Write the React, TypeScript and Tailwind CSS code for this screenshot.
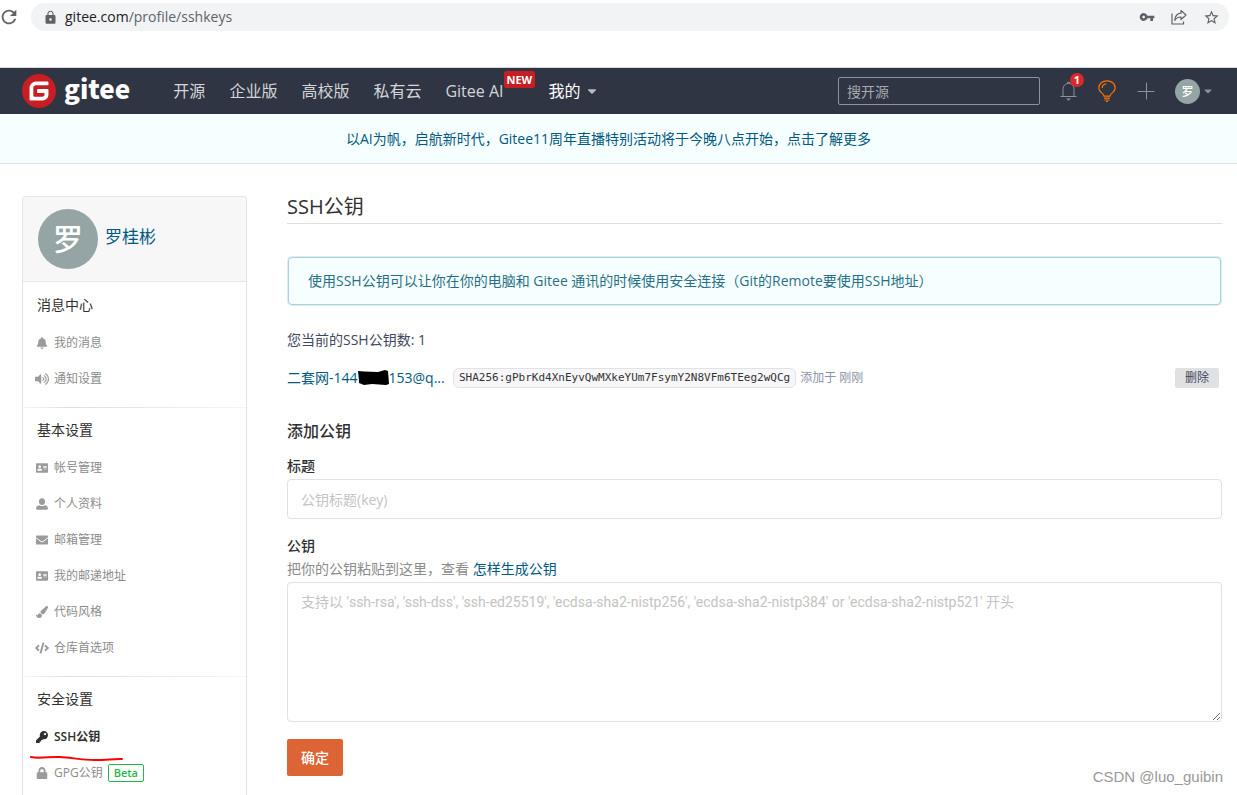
import React from 'react'
import {
  FaAddressCard,
  FaBell,
  FaCaretDown,
  FaCode,
  FaEnvelope,
  FaKey,
  FaLock,
  FaPaintBrush,
  FaVolumeUp,
} from 'react-icons/fa'
import { MdLock, MdRefresh, MdStarBorder, MdVpnKey } from 'react-icons/md'

interface MenuItem {
  label: string
  icon: React.ReactNode
  active?: boolean
  badge?: string
}

interface MenuSection {
  title: string
  items: MenuItem[]
}

function PersonIcon() {
  return (
    <svg viewBox="0 0 12 12" className="h-3 w-3" fill="currentColor">
      <path d="M6 0.2c1.9 0 3.1 1.4 3.1 3.3S7.9 7 6 7 2.900 5.400 2.900 3.500 4.100 0.200 6 0.200zM3.400 7.200C4.100 7.800 5 8.100 6 8.100s1.900-.3 2.600-.9c2 .3 3.400 1.400 3.400 3.100 0 .9-.5 1.500-1.300 1.500H1.300C.5 11.800 0 11.200 0 10.300c0-1.700 1.400-2.800 3.400-3.100z" />
    </svg>
  )
}

const sections: MenuSection[] = [
  {
    title: '消息中心',
    items: [
      { label: '我的消息', icon: <FaBell className="h-3 w-3" /> },
      { label: '通知设置', icon: <FaVolumeUp className="h-3.5 w-3.5" /> },
    ],
  },
  {
    title: '基本设置',
    items: [
      { label: '帐号管理', icon: <FaAddressCard className="h-3 w-3" /> },
      { label: '个人资料', icon: <PersonIcon /> },
      { label: '邮箱管理', icon: <FaEnvelope className="h-3 w-3" /> },
      { label: '我的邮递地址', icon: <FaAddressCard className="h-3 w-3" /> },
      { label: '代码风格', icon: <FaPaintBrush className="h-3 w-3" /> },
      { label: '仓库首选项', icon: <FaCode className="h-3.5 w-3.5" /> },
    ],
  },
  {
    title: '安全设置',
    items: [
      { label: 'SSH公钥', icon: <FaKey className="h-3 w-3" />, active: true },
      { label: 'GPG公钥', icon: <FaLock className="h-3 w-3" />, badge: 'Beta' },
    ],
  },
]

const navLinks = ['开源', '企业版', '高校版', '私有云']

function BrowserBar() {
  return (
    <div className="flex h-[67px] items-start gap-3 pt-[3px] pr-2">
      <button aria-label="刷新" className="-ml-0.5 flex h-7 items-center text-[#5f6368]">
        <MdRefresh className="h-[22px] w-[22px]" />
      </button>
      <div className="-ml-px flex h-7 flex-1 items-center rounded-full bg-[#f1f3f4] pr-[9px] pl-3 text-[#5f6368]">
        <MdLock className="h-[15px] w-[15px]" />
        <span className="ml-[7px] flex-1 text-sm">
          <span className="text-[#202124]">gitee.com</span>/profile/sshkeys
        </span>
        <div className="flex items-center gap-4">
          <MdVpnKey className="h-4 w-4" />
          <svg viewBox="0 0 16 16" className="h-4 w-4" fill="none" stroke="currentColor" strokeWidth="1.2">
            <path d="M1 4.500V15h11.500v-2.500" />
            <path d="M10 1.500l5 4.500-5 4.500V8C7 8 5 9 3.800 11.500 4 7.500 6 4.500 10 4.200z" strokeLinejoin="round" />
          </svg>
          <MdStarBorder className="h-[17px] w-[17px]" />
        </div>
      </div>
    </div>
  )
}

function Logo() {
  return (
    <a href="#" className="flex items-center gap-2 text-white">
      <svg viewBox="0 0 24 24" className="h-[34px] w-[34px]">
        <circle cx="12" cy="12" r="11" fill="#fff" />
        <path
          fill="#c71d23"
          d="M11.984 0A12 12 0 0 0 0 12a12 12 0 0 0 12 12 12 12 0 0 0 12-12A12 12 0 0 0 12 0a12 12 0 0 0-.016 0zm6.090 5.333c.328 0 .593.266.592.593v1.482a.594.594 0 0 1-.593.592H9.777c-.982 0-1.778.796-1.778 1.778v5.630c0 .327.266.592.593.592h5.630c.982 0 1.778-.796 1.778-1.778v-.296a.593.593 0 0 0-.592-.593h-4.150a.592.592 0 0 1-.592-.592v-1.482a.593.593 0 0 1 .593-.592h6.815c.327 0 .593.265.593.592v3.408a4 4 0 0 1-4 4H5.926a.593.593 0 0 1-.593-.593V9.778a4.444 4.444 0 0 1 4.445-4.444h8.296z"
        />
      </svg>
      <span className="pb-1.5 font-['Noto_Sans_CJK_SC',sans-serif] text-[26px] leading-8 font-black">gitee</span>
    </a>
  )
}

function NavBar() {
  return (
    <header className="flex h-[47px] items-center border-t border-[#d5d9de] bg-[#2f3542] pr-[23px] pl-[22px]">
      <Logo />
      <nav className="ml-[43px] flex flex-1 items-center gap-6 text-base text-[#d4d6da]">
        {navLinks.map((label) => (
          <a key={label} href="#">{label}</a>
        ))}
        <a href="#" className="relative mr-[21px]">
          Gitee AI
          <span className="absolute -top-2 left-full rounded-xs bg-[#c71d23] px-[3px] text-[11px] leading-[17px] font-bold text-white">
            NEW
          </span>
        </a>
        <a href="#" className="flex items-center gap-1 text-white">
          我的
          <FaCaretDown className="h-3.5 w-3.5 text-[#b9bcc2]" />
        </a>
      </nav>
      <input
        aria-label="搜开源"
        placeholder="搜开源"
        className="h-7 w-[202px] rounded-xs border border-[#8c92a4] bg-transparent px-2 text-sm text-white outline-none placeholder:text-[#a6a9b0]"
      />
      <div className="ml-5 flex items-center text-[#8c92a4]">
        <button aria-label="通知" className="relative">
          <svg viewBox="0 0 17 20" className="h-5 w-[17px]" fill="none" stroke="currentColor" strokeWidth="1">
            <path d="M0.500 15.500h16M3 15.500V8.500C3 5 5 2.500 8.500 2.500S14 5 14 8.500V15.500M7.500 2.500V1.200h2v1.300" />
            <path d="M6 17.500h5l-2.500 2.200z" fill="currentColor" stroke="none" />
          </svg>
          <span className="absolute -top-2 left-2.5 h-3.5 w-3.5 rounded-full bg-[#db2828] text-center text-[11px] leading-[14px] font-bold text-white">
            1
          </span>
        </button>
        <button aria-label="活动" className="ml-[21px] text-[#fe7300]">
          <svg viewBox="0 0 18 22" className="h-[22px] w-[18px]" fill="none" stroke="currentColor" strokeWidth="1.200">
            <path d="M6 16.200C6 13 0.800 12.500 0.800 8 0.800 3.800 4.500 0.800 9 0.800S17.200 3.800 17.200 8c0 4.500-5.200 5-5.200 8.200z" />
            <path d="M4.200 8C4.200 5.500 6 4 8.300 3.800" />
            <path d="M6 18.200h6M6.500 20h5M8 21.500h2" />
          </svg>
        </button>
        <button aria-label="新建" className="ml-[21px]">
          <svg viewBox="0 0 18 18" className="h-[18px] w-[18px]" stroke="currentColor" strokeWidth="1">
            <path d="M0.500 9.500h17M9.500 0.500v17" />
          </svg>
        </button>
        <button aria-label="账户" className="ml-5 flex items-center gap-0.5">
          <span className="flex h-[25px] w-[25px] items-center justify-center rounded-full bg-[#95a5a6] pt-0.5 text-xs font-medium text-white">
            罗
          </span>
          <FaCaretDown className="h-3 w-3" />
        </button>
      </div>
    </header>
  )
}

function SideMenu() {
  return (
    <aside className="w-[225px] shrink-0 rounded-t-sm border border-b-0 border-[#dfe5ec] bg-white">
      <div className="mb-px flex items-center gap-[7px] rounded-t-sm border-b border-[#e3e9ed] bg-[#f7f7f7] px-[15px] py-3">
        <span className="flex h-[60px] w-[60px] items-center justify-center rounded-full bg-[#95a5a6] text-3xl font-medium text-white">
          罗
        </span>
        <a href="#" className="pb-1 text-[17px] text-[#005980]">罗桂彬</a>
      </div>

      {sections.map((section, i) => (
        <React.Fragment key={section.title}>
          {i > 0 && <div className="h-px bg-linear-to-r from-[#f7f7f7] via-[#dfdfdf] via-20% to-[#f5f5f5]" />}
          <div className="pt-[11px] pb-2.5 last:pb-0">
            <h2 className="mb-[9px] pl-3.5 text-sm leading-[22px] text-[#303030]">{section.title}</h2>
            <ul>
              {section.items.map((item) => (
                <li key={item.label} className="relative">
                  <a
                    href="#"
                    className={
                      item.active
                        ? 'flex h-9 items-center gap-[5px] pl-[11px] text-xs font-semibold text-[#303030]'
                        : 'flex h-9 items-center gap-[5px] pl-[11px] text-xs text-[#8c8c8c]'
                    }
                  >
                    <span className={item.active ? 'flex w-[15px] justify-center' : 'flex w-[15px] justify-center text-[#9b9b9b]'}>
                      {item.icon}
                    </span>
                    {item.label}
                    {item.badge && (
                      <span className="rounded-xs border border-[#21ba45] px-[5px] text-[11px] leading-4 font-semibold text-[#21ba45]">
                        {item.badge}
                      </span>
                    )}
                  </a>
                  {/* hand-drawn underline */}
                  {item.active && (
                    <svg viewBox="0 0 94 6" className="absolute top-full left-[7px] h-1.5 w-[94px]" fill="none">
                      <path
                        d="M1 2C9 4 20 1.500 30 2c12 .5 20 3 35 3 12 0 18-1.200 27-1"
                        stroke="#f00"
                        strokeWidth="2"
                        strokeLinecap="round"
                      />
                    </svg>
                  )}
                </li>
              ))}
            </ul>
          </div>
        </React.Fragment>
      ))}
    </aside>
  )
}

function KeyRow() {
  return (
    <div className="mt-[17px] flex h-5 items-center pr-[3px]">
      <a href="#" className="flex w-[166px] items-center text-sm whitespace-nowrap text-[#005980]">
        二套网-144
        <svg viewBox="0 0 31 18" className="h-[18px] w-[31px]">
          <path d="M0 2l6 .5L20 3l7-2 3 1 1 13-3 1-14-1-8 1-5-2L1 12z" fill="#000" />
        </svg>
        153@q...
      </a>
      <code className="rounded-md border border-[#e1e1e8] bg-[#f7f7f9] px-[5px] font-['DejaVu_Sans_Mono',monospace] text-[11px] leading-[18px] text-[#333]">
        SHA256:gPbrKd4XnEyvQwMXkeYUm7FsymY2N8VFm6TEeg2wQCg
      </code>
      <span className="ml-1 flex-1 text-xs text-[#8c92a4]">添加于 刚刚</span>
      <button className="h-5 rounded-xs bg-[#e0e1e2] px-2.5 text-xs text-[#40485b]">删除</button>
    </div>
  )
}

export default function App() {
  return (
    <div className="relative flex min-h-screen flex-col bg-white font-['Open_Sans','Noto_Sans_CJK_SC',sans-serif]" lang="zh-CN">
      <BrowserBar />
      <NavBar />
      <div className="flex h-[50px] items-center justify-center border-b border-[#dfe5e8] bg-[#f6ffff] pr-5 text-sm">
        <a href="#" className="text-[#005980]">
          以AI为帆，启航新时代，Gitee11周年直播特别活动将于今晚八点开始，点击了解更多
        </a>
      </div>

      <div className="flex flex-1 gap-10 pt-8 pr-[15px] pl-[22px]">
        <SideMenu />

        <main className="min-w-0 flex-1 text-sm text-[#40485b]">
          <h1 className="border-b border-[#dfdfdf] pb-[5px] text-xl leading-[22px] text-[#303030]">SSH公钥</h1>

          <p className="mx-px mt-[33px] flex h-12 items-center rounded-sm border border-[#a3d4df] bg-[#f6ffff] px-[19px] text-[#276f86] shadow-[0_0_0_1px_#e1ebf0]">
            使用SSH公钥可以让你在你的电脑和 Gitee 通讯的时候使用安全连接（Git的Remote要使用SSH地址）
          </p>

          <p className="mt-6 leading-[22px]">您当前的SSH公钥数: 1</p>
          <KeyRow />

          <h2 className="mt-[31px] text-base leading-6 font-medium text-[#303030]">添加公钥</h2>
          <form onSubmit={(e) => e.preventDefault()}>
            <label htmlFor="key-title" className="mt-[13px] block leading-5 font-medium text-[#303030]">标题</label>
            <input
              id="key-title"
              placeholder="公钥标题(key)"
              className="mt-[3px] block h-10 w-full rounded-sm border border-[#dfe0e8] px-[13px] outline-none placeholder:text-[#c4c4c4]"
            />

            <label htmlFor="key-body" className="mt-[17px] block leading-5 font-medium text-[#303030]">公钥</label>
            <p className="mt-[3px] leading-5 text-[#8c8c8c]">
              把你的公钥粘贴到这里，查看 <a href="#" className="text-[#005980]">怎样生成公钥</a>
            </p>
            <textarea
              id="key-body"
              placeholder="支持以 'ssh-rsa', 'ssh-dss', 'ssh-ed25519', 'ecdsa-sha2-nistp256', 'ecdsa-sha2-nistp384' or 'ecdsa-sha2-nistp521' 开头"
              className="mt-[3px] block h-[140px] w-full rounded-sm border border-[#dfe0e8] px-[13px] py-[9px] font-['Roboto','Noto_Sans_CJK_SC',sans-serif] outline-none placeholder:text-[#c4c4c4]"
            />

            <button className="mt-[17px] h-[37px] rounded-xs bg-[#dd6434] px-3.5 font-medium text-white">确定</button>
          </form>
        </main>
      </div>

      <span className="absolute right-3.5 bottom-2 font-['Liberation_Sans',sans-serif] text-[15px] leading-5 text-[#999]">
        CSDN @luo_guibin
      </span>
    </div>
  )
}
